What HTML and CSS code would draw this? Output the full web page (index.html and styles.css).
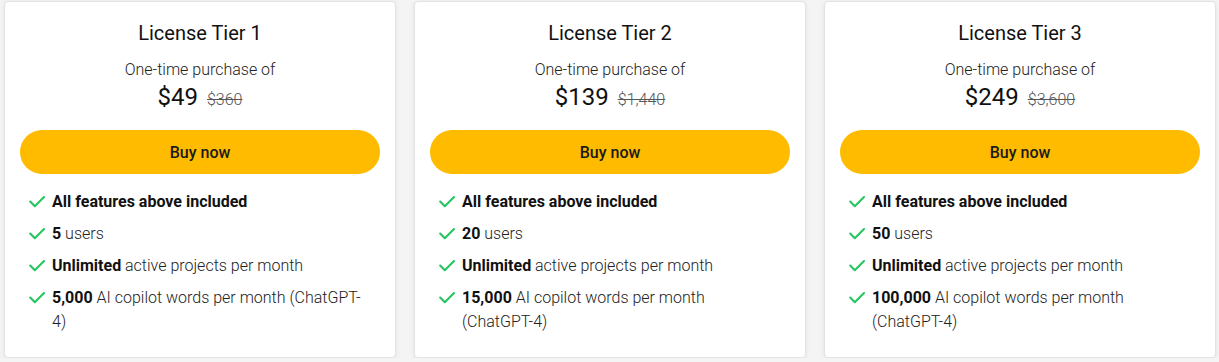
FILE: index.html
```html
<!DOCTYPE html>
<html>
<head>
<meta charset="utf-8">
<link rel="stylesheet" href="styles.css">
</head>
<body>
<div class="tiers">
  <div class="card">
    <h2 class="title">License Tier 1</h2>
    <p class="sub">One-time purchase of</p>
    <div class="price"><span class="now">$49</span><span class="old">$360</span></div>
    <button class="buy">Buy now</button>
    <ul class="features">
      <li><svg class="chk" viewBox="0 0 16 12"><path d="M1.2 5.5 L5.8 10.2 L15 1"/></svg><span><b>All features above included</b></span></li>
      <li><svg class="chk" viewBox="0 0 16 12"><path d="M1.2 5.5 L5.8 10.2 L15 1"/></svg><span><b>5</b> users</span></li>
      <li><svg class="chk" viewBox="0 0 16 12"><path d="M1.2 5.5 L5.8 10.2 L15 1"/></svg><span><b>Unlimited</b> active projects per month</span></li>
      <li><svg class="chk" viewBox="0 0 16 12"><path d="M1.2 5.5 L5.8 10.2 L15 1"/></svg><span><b>5,000</b> AI copilot words per month (ChatGPT-4)</span></li>
    </ul>
  </div>
  <div class="card">
    <h2 class="title">License Tier 2</h2>
    <p class="sub">One-time purchase of</p>
    <div class="price"><span class="now">$139</span><span class="old">$1,440</span></div>
    <button class="buy">Buy now</button>
    <ul class="features">
      <li><svg class="chk" viewBox="0 0 16 12"><path d="M1.2 5.5 L5.8 10.2 L15 1"/></svg><span><b>All features above included</b></span></li>
      <li><svg class="chk" viewBox="0 0 16 12"><path d="M1.2 5.5 L5.8 10.2 L15 1"/></svg><span><b>20</b> users</span></li>
      <li><svg class="chk" viewBox="0 0 16 12"><path d="M1.2 5.5 L5.8 10.2 L15 1"/></svg><span><b>Unlimited</b> active projects per month</span></li>
      <li><svg class="chk" viewBox="0 0 16 12"><path d="M1.2 5.5 L5.8 10.2 L15 1"/></svg><span><b>15,000</b> AI copilot words per month (ChatGPT-4)</span></li>
    </ul>
  </div>
  <div class="card">
    <h2 class="title">License Tier 3</h2>
    <p class="sub">One-time purchase of</p>
    <div class="price"><span class="now">$249</span><span class="old">$3,600</span></div>
    <button class="buy">Buy now</button>
    <ul class="features">
      <li><svg class="chk" viewBox="0 0 16 12"><path d="M1.2 5.5 L5.8 10.2 L15 1"/></svg><span><b>All features above included</b></span></li>
      <li><svg class="chk" viewBox="0 0 16 12"><path d="M1.2 5.5 L5.8 10.2 L15 1"/></svg><span><b>50</b> users</span></li>
      <li><svg class="chk" viewBox="0 0 16 12"><path d="M1.2 5.5 L5.8 10.2 L15 1"/></svg><span><b>Unlimited</b> active projects per month</span></li>
      <li><svg class="chk" viewBox="0 0 16 12"><path d="M1.2 5.5 L5.8 10.2 L15 1"/></svg><span><b>100,000</b> AI copilot words per month (ChatGPT-4)</span></li>
    </ul>
  </div>
</div>
</body>
</html>
```

FILE: styles.css
```css
* { box-sizing: border-box; }
html, body { margin: 0; padding: 0; background: #f4f4f4; }
body {
  font-family: Roboto, "Liberation Sans", sans-serif;
  color: #222;
}
.tiers {
  display: grid;
  grid-template-columns: 392px 392px 392px;
  column-gap: 18px;
  padding: 1px 3px 0 4px;
  align-items: start;
}
.card {
  background: #fff;
  border: 1px solid #e3e3e3;
  border-radius: 4px;
  box-shadow: 0 1px 4px rgba(0,0,0,0.08);
  height: 357px;
  padding: 17px 15px 0 15px;
  display: flex;
  flex-direction: column;
}
.title {
  margin: 0;
  font-size: 20px;
  font-weight: 400;
  line-height: 28px;
  text-align: center;
  color: #111;
}
.sub {
  margin: 12px 0 0;
  font-size: 16px;
  font-weight: 300;
  line-height: 22px;
  text-align: center;
  color: #222;
}
.price {
  display: flex;
  justify-content: center;
  align-items: baseline;
  gap: 9px;
  line-height: 30px;
  margin-top: 1px;
}
.now {
  font-size: 24px;
  font-weight: 400;
  color: #111;
}
.old {
  font-size: 16px;
  font-weight: 300;
  color: #555;
  text-decoration: line-through;
}
.buy {
  margin-top: 15px;
  height: 44px;
  width: 100%;
  border: 0;
  border-radius: 22px;
  background: #ffbb00;
  font-family: Roboto, "Liberation Sans", sans-serif;
  font-size: 16px;
  font-weight: 500;
  color: #1a1a1a;
  padding: 0;
}
.features {
  list-style: none;
  margin: 16px 0 0;
  padding: 0 13px 0 9px;
  display: flex;
  flex-direction: column;
  gap: 8px;
}
.features li {
  display: flex;
  align-items: flex-start;
  gap: 7px;
  font-size: 16px;
  font-weight: 300;
  line-height: 24px;
  color: #222;
}
.features b { font-weight: 700; color: #111; }
.chk {
  width: 16px;
  height: 12px;
  flex: none;
  margin-top: 6px;
  fill: none;
  stroke: #22c55e;
  stroke-width: 2;
  stroke-linecap: round;
  stroke-linejoin: round;
}
```
